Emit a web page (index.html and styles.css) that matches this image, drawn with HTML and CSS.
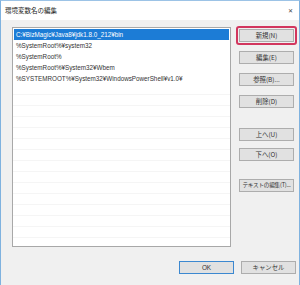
FILE: index.html
```html
<!DOCTYPE html>
<html lang="ja">
<head>
  <meta charset="UTF-8">
  <title>環境変数名の編集</title>
  <link rel="stylesheet" href="styles.css">
</head>
<body>

  <div class="ventana">
    <!-- barra de titulo -->
    <div class="titulo-barra">
      <span class="titulo">環境変数名の編集</span>
      <span class="cerrar">&#x2715;</span>
    </div>

    <div class="cuerpo">
      <div class="fila-principal">
        <div class="lista">
          <div class="item seleccionado">C:¥BizMagic¥Java8¥jdk1.8.0_212¥bin</div>
          <div class="item">%SystemRoot%¥system32</div>
          <div class="item">%SystemRoot%</div>
          <div class="item">%SystemRoot%¥System32¥Wbem</div>
          <div class="item">%SYSTEMROOT%¥System32¥WindowsPowerShell¥v1.0¥</div>
        </div>

        <div class="botones">
          <div class="grupo">
            <span class="marca"><button class="boton">新規(N)</button></span>
            <button class="boton">編集(E)</button>
            <button class="boton">参照(B)...</button>
            <button class="boton">削除(D)</button>
          </div>
          <div class="grupo grupo-mover">
            <button class="boton">上へ(U)</button>
            <button class="boton">下へ(O)</button>
          </div>
          <div class="grupo grupo-texto">
            <button class="boton boton-largo">テキストの編集(T)...</button>
          </div>
        </div>
      </div>

      <div class="pie">
        <button class="boton boton-ok">OK</button>
        <button class="boton">キャンセル</button>
      </div>
    </div>
  </div>

</body>
</html>
```

FILE: styles.css
```css
body {
  margin: 0;
  padding: 0;
  font-family: "Liberation Sans", "Noto Sans CJK JP", sans-serif;
  background: #f0f0f0;
}

.ventana {
  width: 300px;
  height: 285px;
  box-sizing: border-box;
  border-left: 1px solid #7fb2df;
  border-right: 1px solid #7fb2df;
  border-top: 1px solid #9cc3e6;
  background: #f0f0f0;
  display: flex;
  flex-direction: column;
}

.titulo-barra {
  height: 19px;
  background: #ffffff;
  display: flex;
  align-items: center;
  justify-content: space-between;
  padding: 0 6px 0 4px;
  flex-shrink: 0;
}

.titulo {
  font-family: "Noto Sans CJK JP", sans-serif;
  font-size: 6.5px;
  color: #222;
  margin-top: -2px;
}

.cerrar {
  font-size: 6px;
  color: #444;
  margin-top: -1px;
}

.cuerpo {
  flex: 1;
  display: flex;
  flex-direction: column;
  padding: 7px 3px 0 11px;
}

.fila-principal {
  display: flex;
  gap: 8px;
}

.lista {
  width: 219px;
  height: 220px;
  background-color: #ffffff;
  background-image: repeating-linear-gradient(to bottom, transparent 0, transparent 10px, #f5f5f5 10px, #f5f5f5 11px);
  background-position: 0 1px;
  border: 1px solid #a8a8a8;
  padding-top: 1px;
  box-sizing: border-box;
}

.item {
  height: 11px;
  line-height: 11px;
  font-size: 6.3px;
  color: #333;
  padding-left: 3px;
  background: #ffffff;
  white-space: nowrap;
  overflow: hidden;
}

.item.seleccionado {
  background: #1c7cd6;
  color: #ffffff;
  margin: 0 1px;
  padding-left: 2px;
}

.botones {
  width: 55px;
  display: flex;
  flex-direction: column;
  padding-top: 2px;
}

.grupo {
  display: flex;
  flex-direction: column;
  gap: 9px;
}

.grupo-mover {
  margin-top: 20px;
  gap: 7px;
}

.grupo-texto {
  margin-top: 18px;
}

.boton {
  width: 55px;
  height: 13px;
  padding: 0;
  margin: 0;
  font-family: "Noto Sans CJK JP", sans-serif;
  font-size: 6.4px;
  line-height: 11px;
  color: #333;
  background: #e1e1e1;
  border: 1px solid #adadad;
  white-space: nowrap;
}

.boton-largo {
  font-size: 5.6px;
  letter-spacing: -0.2px;
  overflow: hidden;
}

.marca {
  display: block;
  position: relative;
}

/* recuadro rojo de anotacion */
.marca::after {
  content: "";
  position: absolute;
  left: -3px;
  top: -3px;
  right: -3px;
  bottom: -3px;
  border: 2px solid #d2365e;
  border-radius: 3px;
}

.marca .boton {
  display: block;
}

.pie {
  display: flex;
  justify-content: flex-end;
  gap: 7px;
  margin-top: 14px;
}

.boton-ok {
  border-color: #3c88d0;
  font-family: "Liberation Sans", sans-serif;
}
```
